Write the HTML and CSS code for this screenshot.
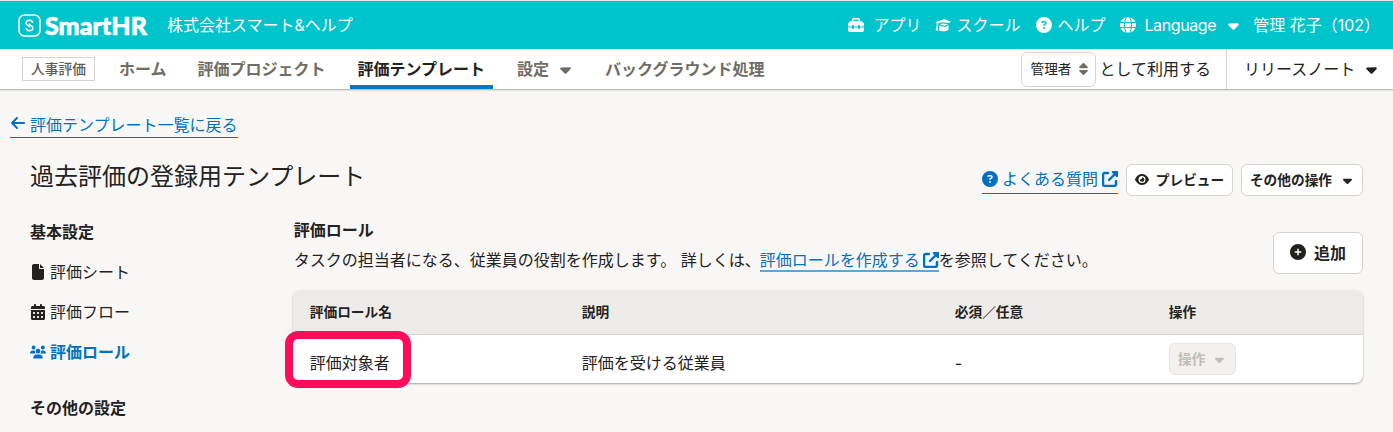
FILE: index.html
```html
<!DOCTYPE html>
<html lang="ja">
<head>
    <meta charset="UTF-8">
    <meta name="viewport" content="width=device-width, initial-scale=1.0">
    <title>評価ロール</title>
    <link rel="stylesheet" href="styles.css">
</head>
<body>
    <svg class="sprite" xmlns="http://www.w3.org/2000/svg">
        <symbol id="caret" viewBox="0 0 320 512"><path d="M137.4 374.6c12.5 12.5 32.8 12.5 45.3 0l128-128c9.2-9.2 11.9-22.9 6.9-34.9s-16.6-19.8-29.6-19.8L32 192c-12.9 0-24.6 7.8-29.6 19.8s-2.2 25.7 6.9 34.9l128 128z"/></symbol>
        <symbol id="question" viewBox="0 0 512 512"><path d="M256 512A256 256 0 1 0 256 0a256 256 0 1 0 0 512zM169.8 165.3c7.9-22.3 29.1-37.3 52.8-37.3h58.3c34.9 0 63.1 28.3 63.1 63.1c0 22.6-12.1 43.5-31.7 54.8L280 264.4c-.2 13-10.9 23.6-24 23.6c-13.3 0-24-10.7-24-24V250.5c0-8.6 4.6-16.5 12.1-20.8l44.3-25.4c4.7-2.7 7.6-7.7 7.6-13.1c0-8.4-6.8-15.1-15.1-15.1H222.6c-3.4 0-6.4 2.1-7.5 5.3l-.4 1.2c-4.4 12.5-18.2 19-30.6 14.6s-19-18.2-14.6-30.6l.4-1.2zM224 352a32 32 0 1 1 64 0 32 32 0 1 1 -64 0z"/></symbol>
        <symbol id="external" viewBox="0 0 512 512"><path stroke="currentColor" stroke-width="16" d="M352 0c-12.9 0-24.6 7.8-29.6 19.8s-2.2 25.7 6.9 34.9L370.7 96 201.4 265.4c-12.5 12.5-12.5 32.8 0 45.3s32.8 12.5 45.3 0L416 141.3l41.4 41.4c9.2 9.2 22.9 11.9 34.9 6.9s19.8-16.6 19.8-29.6V32c0-17.7-14.3-32-32-32H352zM80 32C35.8 32 0 67.8 0 112V432c0 44.2 35.8 80 80 80H400c44.2 0 80-35.8 80-80V320c0-17.7-14.3-32-32-32s-32 14.3-32 32V432c0 8.8-7.2 16-16 16H80c-8.8 0-16-7.2-16-16V112c0-8.8 7.2-16 16-16H192c17.7 0 32-14.3 32-32s-14.3-32-32-32H80z"/></symbol>
    </svg>

    <header class="header">
        <div class="logo">
            <svg class="logo-mark" viewBox="0 0 24 24" fill="none" stroke="currentColor"><rect x="1" y="1" width="22" height="22" rx="6" stroke-width="1.6"/><path d="M15.5 9.300A3.600 3.300 0 0 0 8.400 9.300C8.400 12 12 11.800 12.500 14M8.500 14.700A3.600 3.300 0 0 0 15.600 14.700C15.600 12 12 12.200 11.500 10" stroke-width="1.5"/></svg>
            <span class="logo-name">SmartHR</span>
        </div>
        <div class="company">株式会社スマート&amp;ヘルプ</div>
        <nav class="header-nav">
            <a class="apps"><svg class="icon" viewBox="0 0 512 512"><path d="M176 88v40H336V88c0-4.4-3.6-8-8-8H184c-4.4 0-8 3.6-8 8zm-48 40V88c0-30.9 25.1-56 56-56H328c30.9 0 56 25.1 56 56v40h28.1c12.7 0 24.9 5.1 33.9 14.1l51.9 51.9c9 9 14.1 21.2 14.1 33.9V304H384V288c0-17.7-14.3-32-32-32s-32 14.3-32 32v16H192V288c0-17.7-14.3-32-32-32s-32 14.3-32 32v16H0V227.9c0-12.7 5.1-24.9 14.1-33.9l51.9-51.9c9-9 21.2-14.1 33.9-14.1H128zM0 416V336H128v16c0 17.7 14.3 32 32 32s32-14.3 32-32V336H320v16c0 17.7 14.3 32 32 32s32-14.3 32-32V336H512v80c0 35.3-28.7 64-64 64H64c-35.3 0-64-28.7-64-64z"/></svg>アプリ</a>
            <a class="school"><svg class="icon" viewBox="0 0 16 16"><path d="M9.300 2 16 4.800 13.800 6 7.600 5.300 3.300 6.300l-.6 3 .3 4.200H.6l.9-4.200.4-3.300L.2 5.200z"/><path d="M4.600 7.300 7.800 6.400l5.400.8-3.600 1.600zM4.300 8.600l5.500 1.300 4-1.700-.4 4.800c-1.700 1.600-7.500 1.900-9.600.3z"/></svg>スクール</a>
            <a class="help"><svg class="icon"><use href="#question"/></svg>ヘルプ</a>
            <a class="lang"><svg class="icon" viewBox="0 0 512 512"><path d="M352 256c0 22.2-1.2 43.6-3.3 64H163.3c-2.2-20.4-3.3-41.8-3.3-64s1.2-43.6 3.3-64H348.7c2.2 20.4 3.3 41.8 3.3 64zm28.8-64H503.9c5.3 20.5 8.1 41.9 8.1 64s-2.8 43.5-8.1 64H380.8c2.1-20.6 3.2-42 3.2-64s-1.1-43.4-3.2-64zm112.6-32H376.7c-10-63.9-29.8-117.4-55.3-151.6c78.3 20.7 142 77.5 171.9 151.6zm-149.1 0H167.7c6.1-36.4 15.5-68.6 27-94.7c10.5-23.6 22.2-40.7 33.5-51.5C239.4 3.2 248.7 0 256 0s16.6 3.2 27.8 13.8c11.3 10.8 23 27.9 33.5 51.5c11.6 26 20.9 58.2 27 94.7zm-209 0H18.6C48.6 85.9 112.2 29.1 190.6 8.4C165.1 42.6 145.3 96.1 135.3 160zM8.1 192H131.2c-2.1 20.6-3.2 42-3.2 64s1.1 43.4 3.2 64H8.1C2.8 299.5 0 278.1 0 256s2.8-43.5 8.1-64zM194.7 446.6c-11.6-26-20.9-58.2-27-94.6H344.3c-6.1 36.4-15.5 68.6-27 94.6c-10.5 23.6-22.2 40.7-33.5 51.5C272.6 508.8 263.3 512 256 512s-16.6-3.2-27.8-13.8c-11.3-10.8-23-27.9-33.5-51.5zM135.3 352c10 63.9 29.8 117.4 55.3 151.6C112.2 482.9 48.6 426.1 18.6 352H135.3zm358.1 0c-30 74.1-93.6 130.9-171.9 151.6c25.5-34.2 45.2-87.7 55.3-151.6H493.4z"/></svg>Language<svg class="caret"><use href="#caret"/></svg></a>
            <a class="user">管理 花子（102）</a>
        </nav>
    </header>

    <nav class="appnav">
        <span class="category">人事評価</span>
        <a class="tab">ホーム</a>
        <a class="tab">評価プロジェクト</a>
        <a class="tab current">評価テンプレート</a>
        <a class="tab settings">設定<svg class="caret"><use href="#caret"/></svg></a>
        <a class="tab">バックグラウンド処理</a>
        <div class="role">
            <span class="select">管理者<svg class="sort" viewBox="0 0 320 512"><path d="M137.4 41.4c12.5-12.5 32.8-12.5 45.3 0l128 128c9.2 9.2 11.9 22.9 6.9 34.9s-16.6 19.8-29.6 19.8H32c-12.9 0-24.6-7.8-29.6-19.8s-2.2-25.7 6.9-34.9l128-128zm0 429.3l-128-128c-9.2-9.2-11.9-22.9-6.9-34.9s16.6-19.8 29.6-19.8H288c12.9 0 24.6 7.8 29.6 19.8s2.2 25.7-6.9 34.9l-128 128c-12.5 12.5-32.8 12.5-45.3 0z"/></svg></span>
            として利用する
        </div>
        <a class="release">リリースノート<svg class="caret"><use href="#caret"/></svg></a>
    </nav>

    <main class="page">
        <a class="link back"><svg class="icon" viewBox="0 0 448 512"><path d="M9.4 233.4c-12.5 12.5-12.5 32.8 0 45.3l160 160c12.5 12.5 32.8 12.5 45.3 0s12.5-32.8 0-45.3L109.2 288 416 288c17.7 0 32-14.3 32-32s-14.3-32-32-32l-306.7 0L214.6 118.6c12.5-12.5 12.5-32.8 0-45.3s-32.8-12.5-45.3 0l-160 160z"/></svg>評価テンプレート一覧に戻る</a>

        <div class="title-row">
            <h1>過去評価の登録用テンプレート</h1>
            <div class="actions">
                <a class="link faq"><svg class="icon"><use href="#question"/></svg>よくある質問<svg class="icon"><use href="#external"/></svg></a>
                <button class="button preview"><svg class="eye" viewBox="0 0 576 512"><path d="M288 32c-80.8 0-145.5 36.8-192.6 80.6C48.6 156 17.3 208 2.5 243.7c-3.3 7.9-3.3 16.7 0 24.6C17.3 304 48.6 356 95.4 399.4C142.5 443.2 207.2 480 288 480s145.5-36.8 192.6-80.6c46.8-43.5 78.1-95.4 93-131.1c3.3-7.9 3.3-16.7 0-24.6c-14.9-35.7-46.2-87.7-93-131.1C433.5 68.8 368.8 32 288 32zM144 256a144 144 0 1 1 288 0 144 144 0 1 1 -288 0zm144-64c0 35.3-28.7 64-64 64c-7.1 0-13.9-1.2-20.3-3.3c-5.5-1.8-11.9 1.6-11.7 7.4c.3 6.9 1.3 13.8 3.2 20.7c13.7 51.2 66.4 81.6 117.6 67.9s81.6-66.4 67.9-117.6c-11.1-41.5-47.8-69.4-88.6-71.1c-5.8-.2-9.2 6.1-7.4 11.7c2.1 6.4 3.3 13.2 3.3 20.3z"/></svg>プレビュー</button>
                <button class="button others">その他の操作<svg class="caret"><use href="#caret"/></svg></button>
            </div>
        </div>

        <div class="columns">
            <aside class="side">
                <h2>基本設定</h2>
                <a class="side-item"><svg class="icon" viewBox="0 0 384 512"><path d="M0 64C0 28.7 28.7 0 64 0H224V128c0 17.7 14.3 32 32 32H384V448c0 35.3-28.7 64-64 64H64c-35.3 0-64-28.7-64-64V64zm384 64H256V0L384 128z"/></svg>評価シート</a>
                <a class="side-item"><svg class="icon" viewBox="0 0 448 512"><path d="M128 0c17.7 0 32 14.3 32 32V64H288V32c0-17.7 14.3-32 32-32s32 14.3 32 32V64h48c26.5 0 48 21.5 48 48v48H0V112C0 85.5 21.5 64 48 64H96V32c0-17.7 14.3-32 32-32zM0 192H448V464c0 26.5-21.5 48-48 48H48c-26.5 0-48-21.5-48-48V192zm64 80v32c0 8.8 7.2 16 16 16h32c8.8 0 16-7.2 16-16V272c0-8.8-7.2-16-16-16H80c-8.8 0-16 7.2-16 16zm128 0v32c0 8.8 7.2 16 16 16h32c8.8 0 16-7.2 16-16V272c0-8.8-7.2-16-16-16H208c-8.8 0-16 7.2-16 16zm144-16c-8.8 0-16 7.2-16 16v32c0 8.8 7.2 16 16 16h32c8.8 0 16-7.2 16-16V272c0-8.8-7.2-16-16-16H336zM64 400v32c0 8.8 7.2 16 16 16h32c8.8 0 16-7.2 16-16V400c0-8.8-7.2-16-16-16H80c-8.8 0-16 7.2-16 16zm144-16c-8.8 0-16 7.2-16 16v32c0 8.8 7.2 16 16 16h32c8.8 0 16-7.2 16-16V400c0-8.8-7.2-16-16-16H208zm112 16v32c0 8.8 7.2 16 16 16h32c8.8 0 16-7.2 16-16V400c0-8.8-7.2-16-16-16H336c-8.8 0-16 7.2-16 16z"/></svg>評価フロー</a>
                <a class="side-item current"><svg class="icon" viewBox="0 0 640 512"><path d="M144 0a80 80 0 1 1 0 160A80 80 0 1 1 144 0zM512 0a80 80 0 1 1 0 160A80 80 0 1 1 512 0zM0 298.7C0 239.8 47.8 192 106.7 192h42.7c15.9 0 31 3.5 44.6 9.7c-1.3 7.2-1.9 14.7-1.9 22.3c0 38.2 16.8 72.5 43.3 96c-.2 0-.4 0-.7 0H21.3C9.6 320 0 310.4 0 298.7zM405.3 320c-.2 0-.4 0-.7 0c26.6-23.5 43.3-57.8 43.3-96c0-7.6-.7-15-1.9-22.3c13.6-6.3 28.7-9.7 44.6-9.7h42.7C592.2 192 640 239.8 640 298.7c0 11.8-9.6 21.3-21.3 21.3H405.3zM224 224a96 96 0 1 1 192 0 96 96 0 1 1 -192 0zM128 485.3C128 411.7 187.7 352 261.3 352H378.7C452.3 352 512 411.7 512 485.3c0 14.7-11.9 26.7-26.7 26.7H154.7c-14.7 0-26.7-11.9-26.7-26.7z"/></svg>評価ロール</a>
                <h2 class="other">その他の設定</h2>
            </aside>

            <section class="content">
                <div class="content-head">
                    <div>
                        <h2>評価ロール</h2>
                        <p>タスクの担当者になる、従業員の役割を作成します。 詳しくは、<a class="link doc">評価ロールを作成する<svg class="icon"><use href="#external"/></svg></a>を参照してください。</p>
                    </div>
                    <button class="button add"><svg class="icon" viewBox="0 0 512 512"><path d="M256 512A256 256 0 1 0 256 0a256 256 0 1 0 0 512zM232 344V280H168c-13.3 0-24-10.7-24-24s10.7-24 24-24h64V168c0-13.3 10.7-24 24-24s24 10.7 24 24v64h64c13.3 0 24 10.7 24 24s-10.7 24-24 24H280v64c0 13.3-10.7 24-24 24s-24-10.7-24-24z"/></svg>追加</button>
                </div>
                <div class="table">
                    <div class="tr th">
                        <div>評価ロール名</div>
                        <div>説明</div>
                        <div>必須／任意</div>
                        <div>操作</div>
                    </div>
                    <div class="tr td">
                        <div class="target">評価対象者<span class="marker"></span></div>
                        <div>評価を受ける従業員</div>
                        <div>-</div>
                        <button class="button disabled" disabled>操作<svg class="caret"><use href="#caret"/></svg></button>
                    </div>
                </div>
            </section>
        </div>
    </main>
</body>
</html>
```
FILE: styles.css
```css
*{
    box-sizing: border-box;
}
html, body{
    margin: 0;
    height: 432px;
    overflow: hidden;
}
body{
    font-family: Inter, "Noto Sans CJK JP", sans-serif;
    font-size: 16px;
    line-height: 24px;
    color: #23221e;
    background: #f8f7f6;
    white-space: nowrap;
    border-top: 1px solid #e4e4e2;
}
h1, h2, p{
    margin: 0;
    font-size: 16px;
}
svg{
    fill: currentColor;
    flex: none;
    overflow: visible;
}
.sprite{
    display: none;
}
.icon{
    width: 16px;
    height: 16px;
}
.caret{
    width: 11px;
    height: 17px;
}
.header{
    display: flex;
    align-items: center;
    height: 48px;
    padding: 0 13px 0 18px;
    color: #fff;
    background: #00c4cc;
}
.logo{
    display: flex;
    align-items: center;
    width: 149px;
}
.logo-mark{
    width: 23px;
    height: 23px;
    fill: none;
    margin-right: 4px;
}
.logo-name{
    font-family: Lato, sans-serif;
    font-size: 25px;
    font-weight: 900;
    -webkit-text-stroke: 0.6px #fff;
}
.header-nav{
    display: flex;
    margin-left: auto;
}
.header-nav a{
    display: flex;
    align-items: center;
    gap: 5px;
}
.header-nav .apps{
    gap: 9px;
    margin-right: 14px;
}
.header-nav .school{
    margin-right: 16px;
}
.header-nav .help{
    margin-right: 15px;
}
.header-nav .lang{
    gap: 8px;
    margin-right: 14px;
    letter-spacing: -0.4px;
}
.lang .caret{
    margin-left: 4px;
}
.appnav{
    display: flex;
    align-items: center;
    height: 41px;
    padding-left: 22px;
    background: #fff;
    border-bottom: 1px solid #bdbcba;
    box-shadow: 0 1px 1px #e4e3e1;
}
.category{
    width: 73px;
    height: 24px;
    margin-right: 16px;
    border: 1px solid #d6d3d0;
    color: #5f5b52;
    font-size: 13.7px;
    font-weight: 500;
    line-height: 22px;
    text-align: center;
}
.tab{
    display: flex;
    align-items: center;
    gap: 10px;
    height: 40px;
    padding: 0 8px;
    margin-right: 15px;
    color: #706d65;
    font-weight: bold;
}
.tab.current{
    margin-left: 1px;
    margin-right: 16px;
    color: #23221e;
    border-bottom: 4px solid #0077c7;
    padding-top: 4px;
}
.tab.settings{
    gap: 11px;
    margin-right: 18px;
}
.role{
    display: flex;
    align-items: center;
    gap: 3px;
    margin-left: auto;
    margin-right: 15px;
}
.select{
    display: flex;
    align-items: center;
    gap: 7px;
    width: 75px;
    height: 35px;
    padding-left: 8px;
    border: 1px solid #d6d3d0;
    border-radius: 6px;
    font-size: 13.7px;
}
.sort{
    width: 9px;
    height: 14px;
    color: #706d65;
}
.release{
    display: flex;
    align-items: center;
    gap: 11px;
    width: 167px;
    height: 40px;
    padding-left: 17px;
    border-left: 1px solid #d6d3d0;
}
.link{
    color: #0071c1;
    border-bottom: 1px solid #0071c1;
}
.page{
    padding: 22px 30px 0;
}
.back{
    display: flex;
    align-items: center;
    gap: 4px;
    width: 228px;
    margin-left: -20px;
    height: 26px;
}
.back .icon{
    margin-top: -3px;
}
.title-row{
    display: flex;
    align-items: flex-start;
    justify-content: space-between;
    height: 82px;
    padding-top: 22px;
}
.title-row h1{
    margin-top: 1px;
    font-size: 24px;
    font-weight: normal;
    line-height: 32px;
}
.actions{
    display: flex;
    margin-top: 4px;
}
.faq{
    display: flex;
    align-items: center;
    gap: 4px;
    height: 30px;
    margin-right: 8px;
}
.button{
    display: flex;
    align-items: center;
    justify-content: center;
    height: 32px;
    padding: 0 0 2px;
    border: 1px solid #d6d3d0;
    border-radius: 6px;
    background: #fff;
    color: #23221e;
    font-family: inherit;
    font-size: 13.7px;
    font-weight: bold;
}
.button .caret{
    width: 9px;
    height: 15px;
    margin-top: 2px;
}
.preview{
    width: 107px;
    margin-right: 8px;
    gap: 7px;
}
.eye{
    width: 14px;
    height: 13px;
    margin-top: 1px;
}
.others{
    width: 122px;
    gap: 11px;
    padding-right: 2px;
}
.columns{
    display: flex;
}
.side{
    width: 263px;
}
.side h2{
    margin-bottom: 16px;
}
.side .other{
    margin-top: 32px;
}
.side-item{
    display: flex;
    align-items: center;
    gap: 4px;
    margin-bottom: 16px;
}
.side-item.current{
    color: #0071c1;
    font-weight: bold;
}
.content{
    width: 1071px;
    margin-top: -2px;
}
.content-head{
    display: flex;
    justify-content: space-between;
    height: 72px;
    padding-left: 1px;
}
.content-head p{
    margin-top: 6px;
}
.doc{
    display: inline-flex;
    align-items: center;
    gap: 3px;
    height: 24px;
    border-bottom: 2px solid #5aa6da;
    margin-left: -1px;
    padding-top: 2px;
    vertical-align: top;
}
.add{
    width: 90px;
    height: 42px;
    margin-top: 14px;
    font-size: 16px;
    gap: 8px;
}
.table{
    border-radius: 8px;
    background: #fff;
    box-shadow: 0 1px 2px #a5a3a0;
}
.tr{
    display: grid;
    grid-template-columns: 272px 373px 214px 1fr;
    align-items: center;
    padding-left: 17px;
}
.th{
    height: 45px;
    border-bottom: 1px solid #d6d3d0;
    border-radius: 8px 8px 0 0;
    background: #edebe8;
    font-size: 13.7px;
    font-weight: bold;
}
.td{
    height: 48px;
    padding-top: 7px;
}
.target{
    position: relative;
}
/* pink frame drawn over the first cell */
.marker{
    position: absolute;
    left: -25px;
    top: -20px;
    width: 126px;
    height: 57px;
    border: 8px solid #ff0d5b;
    border-radius: 13px;
}
.disabled{
    width: 67px;
    margin-top: -7px;
    gap: 10px;
    padding-right: 2px;
    color: #c1bdb7;
    background: #f2f1f0;
    border-color: #e6e5e3;
}
```
